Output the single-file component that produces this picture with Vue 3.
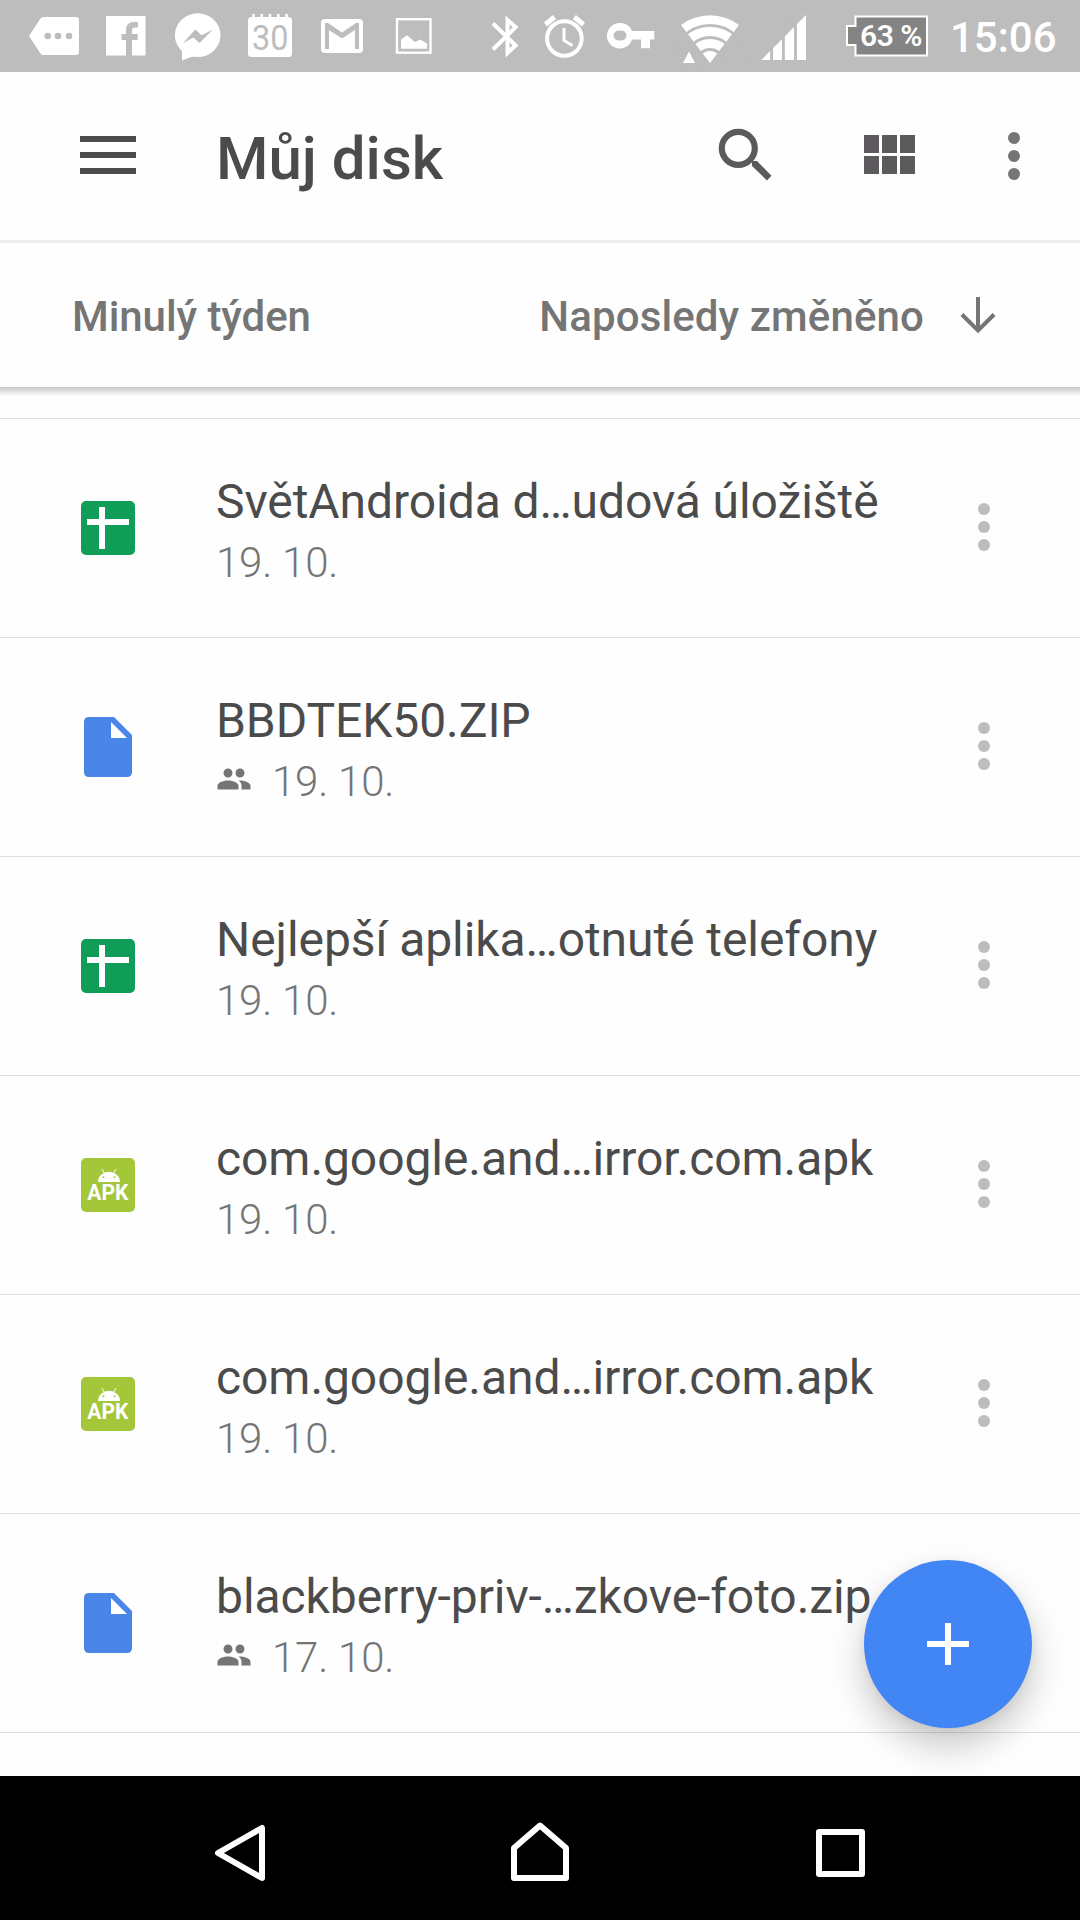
<script setup>
  const files = [
    { type: 'sheet', name: 'SvětAndroida d…udová úložiště', date: '19. 10.' },
    { type: 'file', name: 'BBDTEK50.ZIP', date: '19. 10.', shared: true },
    { type: 'sheet', name: 'Nejlepší aplika…otnuté telefony', date: '19. 10.' },
    { type: 'apk', name: 'com.google.and…irror.com.apk', date: '19. 10.' },
    { type: 'apk', name: 'com.google.and…irror.com.apk', date: '19. 10.' },
    { type: 'file', name: 'blackberry-priv-…zkove-foto.zip', date: '17. 10.', shared: true }
  ];
</script>

<template>
  <div class="screen">
    <div class="status-bar">
      <div class="notifications">
        <svg width="72" height="72">
          <path fill="#fff" d="M11 36L22.5 18.5Q23.5 17 25.500 17H58Q61 17 61 20V52Q61 55 58 55H25.500Q23.500 55 22.500 53.500Z" />
          <g class="cut">
            <circle cx="29.700" cy="36" r="3.300" />
            <circle cx="40" cy="36" r="3.300" />
            <circle cx="51" cy="36" r="3.300" />
          </g>
        </svg>
        <svg width="72" height="72">
          <rect x="16" y="16" width="39.500" height="39.500" fill="#fff" />
          <path class="cut" d="M36 56V40H31.500V34H36V30.500C36 25 39 22 44 22H48V27.500H45C42.800 27.500 42 28.500 42 30.500V34H48L47.500 40H42V56Z" />
        </svg>
        <svg width="72" height="72">
          <ellipse cx="35.700" cy="35.200" rx="22.800" ry="21.900" fill="#fff" />
          <path fill="#fff" d="M20 48V60.500L32 56Z" />
          <path class="cut" d="M20.800 43.300L33.300 29.500L39.600 35.300L50.500 29.800L37.600 42.900L31.300 37.400Z" />
        </svg>
        <svg width="72" height="72">
          <rect x="14" y="17" width="44" height="40" rx="3.500" fill="#fff" />
          <path stroke="#fff" stroke-width="2.600" d="M19.500 14V18M27.700 14V18M36 14V18M44.300 14V18M52.500 14V18" />
          <text class="day" x="18" y="50" textLength="36.500" lengthAdjust="spacingAndGlyphs">30</text>
        </svg>
        <svg width="72" height="72">
          <rect x="15" y="19" width="42" height="34" rx="4" fill="#fff" />
          <path class="cut" d="M19 49V23H22L36 32.500L50 23H53V49H49V30L36 38.500L23 30V49Z" />
        </svg>
        <svg width="72" height="72">
          <rect x="19" y="19.200" width="33.500" height="33.500" fill="none" stroke="#fff" stroke-width="2.400" />
          <path fill="#fff" d="M23 39.500L29 35.300L37 42L42.500 39.500L49 43.500V48.700H23Z" />
        </svg>
      </div>
      <div class="system">
        <svg width="48" height="72">
          <path fill="none" stroke="#fff" stroke-width="4" d="M12 23.500L34.600 45.500L26.500 53V20L34.600 27.200L12 49.500" />
        </svg>
        <svg width="70" height="72">
          <g fill="none" stroke="#fff">
            <circle cx="35.400" cy="38.500" r="17.300" stroke-width="4" />
            <path stroke-width="5" d="M16.500 24.500L25.500 17M45.300 17L54.500 24.500" />
            <path stroke-width="3" d="M35 28V40.500L43.500 45.500" />
          </g>
        </svg>
        <svg width="70" height="72">
          <path fill="#fff" fill-rule="evenodd" d="M21 23A12.800 12.800 0 1 0 33 39.500H42V48.300H51V39.500H55.300V31H33A12.800 12.800 0 0 0 21 23ZM21 30.700A5 5 0 1 1 21 40.300A5 5 0 1 1 21 30.700Z" />
        </svg>
        <svg width="80" height="72">
          <path fill="#fff" d="M41 63L12 25A48 48 0 0 1 70 25Z" />
          <g class="gap">
            <circle cx="41" cy="63" r="37.600" />
            <circle cx="41" cy="63" r="25.500" />
            <circle cx="41" cy="63" r="13.500" />
          </g>
          <path fill="#fff" d="M20 51.500L26 63H14Z" />
        </svg>
        <svg width="80" height="72">
          <path fill="#fff" d="M12.300 60L57 15V60Z" />
          <path class="gap" d="M22.600 15V60M34.400 15V60M46.500 15V60" />
        </svg>
        <svg width="106" height="72">
          <path fill="#848484" stroke="#fff" stroke-width="2" d="M26.500 16.500H98V55.500H26.500V45H18V26H26.500Z" />
          <text class="charge" x="31" y="45.800" textLength="62.500">63 %</text>
        </svg>
        <span class="clock">15:06</span>
      </div>
    </div>

    <header class="toolbar">
      <svg class="menu" width="56" height="38">
        <path fill="#4b4b4b" d="M0 0H56V6H0ZM0 16H56V22H0ZM0 32H56V38H0Z" />
      </svg>
      <h1>Můj disk</h1>
      <svg class="search" width="54" height="54">
        <circle cx="20.300" cy="20.300" r="16.500" fill="none" stroke="#5c5a5d" stroke-width="6.200" />
        <path fill="#5c5a5d" d="M34 33H39L53.500 47.800L49 52.500L34 38Z" />
      </svg>
      <svg class="grid" width="51" height="39">
        <path fill="#5c5a5d" d="M0 0H15V18H0ZM18 0H33V18H18ZM36 0H51V18H36ZM0 21H15V39H0ZM18 21H33V39H18ZM36 21H51V39H36Z" />
      </svg>
      <svg class="more" width="12" height="48">
        <circle cx="6" cy="6" r="6" />
        <circle cx="6" cy="24" r="6" />
        <circle cx="6" cy="42" r="6" />
      </svg>
    </header>

    <div class="sort-bar">
      <span class="period">Minulý týden</span>
      <span class="order">Naposledy změněno</span>
      <svg width="36" height="38">
        <path fill="none" stroke="#757575" stroke-width="4" d="M18 0V33M1.900 17.500L18 33.500L34.100 17.500" />
      </svg>
    </div>

    <main class="list">
      <div v-for="(file, i) in files" :key="i" class="row">
        <div class="type">
          <svg v-if="file.type === 'sheet'" width="54" height="54">
            <rect width="54" height="54" rx="5" fill="#0f9d58" />
            <path fill="#fff" d="M18 6H24V18H48V24H24V48H18V24H6V18H18Z" />
          </svg>
          <svg v-else-if="file.type === 'file'" width="48" height="60">
            <path fill="#4a86e8" d="M5 0H30L48 18V55Q48 60 43 60H5Q0 60 0 55V5Q0 0 5 0Z" />
            <path fill="#fff" d="M27 5V21H43Z" />
          </svg>
          <svg v-else width="54" height="54">
            <rect width="54" height="54" rx="5" fill="#a4c639" />
            <path fill="#fff" d="M17 24A11 10.300 0 0 1 39 24Z" />
            <path stroke="#fff" stroke-width="1" d="M21 11L23.500 15.500M35 11L32.500 15.500" />
            <circle cx="22.500" cy="19.200" r="1" fill="#a4c639" />
            <circle cx="33.500" cy="19.200" r="1" fill="#a4c639" />
            <text class="apk" x="6.300" y="42" textLength="41" lengthAdjust="spacingAndGlyphs">APK</text>
          </svg>
        </div>
        <div class="info">
          <p class="name">{{ file.name }}</p>
          <p class="date">
            <svg v-if="file.shared" width="36" height="36" viewBox="0 0 24 24">
              <path fill="#757575" d="M16 11c1.660 0 2.990-1.340 2.990-3S17.660 5 16 5s-3 1.340-3 3 1.340 3 3 3zm-8 0c1.660 0 2.990-1.340 2.990-3S9.660 5 8 5 5 6.340 5 8s1.340 3 3 3zm0 2c-2.330 0-7 1.170-7 3.500V19h14v-2.500c0-2.330-4.670-3.500-7-3.500zm8 0c-.290 0-.620.020-.970.050 1.160.840 1.970 1.970 1.970 3.450V19h6v-2.500c0-2.330-4.670-3.500-7-3.500z" />
            </svg>
            {{ file.date }}
          </p>
        </div>
        <svg class="more" width="12" height="48">
          <circle cx="6" cy="6" r="6" />
          <circle cx="6" cy="24" r="6" />
          <circle cx="6" cy="42" r="6" />
        </svg>
      </div>
    </main>

    <button class="fab">
      <svg width="42" height="42">
        <path fill="#fff" d="M18 0H24V18H42V24H24V42H18V24H0V18H18Z" />
      </svg>
    </button>

    <nav class="nav-bar">
      <svg width="72" height="72">
        <path d="M14 41L58 16V66Z" />
      </svg>
      <svg width="72" height="72">
        <path d="M10 66V36L36 13.500L62 36V66Z" />
      </svg>
      <svg width="72" height="72">
        <path d="M15 20H58V62H15Z" />
      </svg>
    </nav>
  </div>
</template>

<style>
  body {
    margin: 0;
    background: #fff;
  }
</style>

<style scoped>
  .screen {
    position: relative;
    width: 1080px;
    height: 1920px;
    display: flex;
    flex-direction: column;
    overflow: hidden;
    background: #fefefe;
    font-family: Roboto, "Noto Sans", sans-serif;
  }
  svg {
    display: block;
    flex: none;
  }

  .status-bar {
    height: 72px;
    flex: none;
    display: flex;
    justify-content: space-between;
    padding: 0 25px 0 18px;
    background: #bdbdbd;
  }
  .notifications,
  .system {
    display: flex;
  }
  .cut {
    fill: #bdbdbd;
  }
  .gap {
    fill: none;
    stroke: #bdbdbd;
    stroke-width: 2.9;
  }
  .day {
    font-size: 35px;
    fill: #bdbdbd;
  }
  .charge {
    font-size: 30px;
    font-weight: 600;
    fill: #fff;
  }
  .clock {
    width: 105px;
    padding-left: 15px;
    font-size: 42px;
    font-weight: 500;
    line-height: 75px;
    color: #fff;
  }

  .toolbar {
    height: 168px;
    flex: none;
    display: flex;
    align-items: center;
    padding: 0 60px 0 80px;
    border-bottom: 3px solid #eee;
  }
  .toolbar .menu {
    margin-top: -2px;
  }
  h1 {
    flex: 1;
    margin: 0;
    padding: 5px 0 0 80px;
    font-size: 60px;
    font-weight: 500;
    line-height: 70px;
    color: #4b4b4b;
  }
  .toolbar .search {
    margin-right: 92px;
    margin-top: -2px;
  }
  .toolbar .grid {
    margin-right: 93px;
    margin-top: -3px;
  }
  .toolbar .more {
    fill: #757575;
  }

  .sort-bar {
    position: relative;
    height: 144px;
    flex: none;
    display: flex;
    align-items: center;
    padding: 0 84px 0 72px;
    font-size: 42px;
    font-weight: 500;
    line-height: 50px;
    color: #757575;
  }
  .sort-bar span {
    padding-top: 3px;
  }
  .sort-bar svg {
    margin-top: 2px;
  }
  .sort-bar::after {
    content: "";
    position: absolute;
    left: 0;
    right: 0;
    top: 144px;
    height: 9px;
    background: linear-gradient(#c6c6c6, #d9d9d9 35%, #fefefe);
  }
  .period {
    letter-spacing: -0.07px;
  }
  .order {
    margin-left: auto;
    margin-right: 36px;
    letter-spacing: 0.12px;
  }

  .list {
    flex: 1;
    min-height: 0;
    margin-top: 31px;
    border-top: 1px solid #e0e0e0;
  }
  .row {
    height: 218px;
    display: flex;
    align-items: center;
    padding-right: 90px;
    border-bottom: 1px solid #e0e0e0;
  }
  .type {
    width: 216px;
    display: flex;
    justify-content: center;
  }
  .apk {
    font-size: 21.5px;
    font-weight: 700;
    fill: #fff;
  }
  .info {
    flex: 1;
    padding-top: 8px;
  }
  .info p {
    margin: 0;
    line-height: 61px;
    white-space: nowrap;
  }
  .name {
    font-size: 48px;
    letter-spacing: -0.07px;
    color: #4b4b4b;
  }
  .date {
    display: flex;
    align-items: center;
    font-size: 42px;
    font-weight: 300;
    letter-spacing: -0.2px;
    color: #757575;
  }
  .date svg {
    margin: 0 20px 5px 0;
  }
  .row .more {
    fill: #bdbdbd;
    margin-top: -2px;
  }

  .fab {
    position: absolute;
    right: 48px;
    bottom: 192px;
    width: 168px;
    height: 168px;
    display: flex;
    align-items: center;
    justify-content: center;
    padding: 0;
    border: 0;
    border-radius: 50%;
    background: #4285f4;
    box-shadow: 0 18px 36px rgba(0, 0, 0, 0.22), 0 2px 10px rgba(0, 0, 0, 0.06);
  }

  .nav-bar {
    position: relative;
    height: 144px;
    flex: none;
    display: flex;
    align-items: center;
    justify-content: center;
    gap: 228px;
    background: #000;
  }
  .nav-bar path {
    fill: none;
    stroke: #fff;
    stroke-width: 6;
    stroke-linejoin: round;
  }
</style>
